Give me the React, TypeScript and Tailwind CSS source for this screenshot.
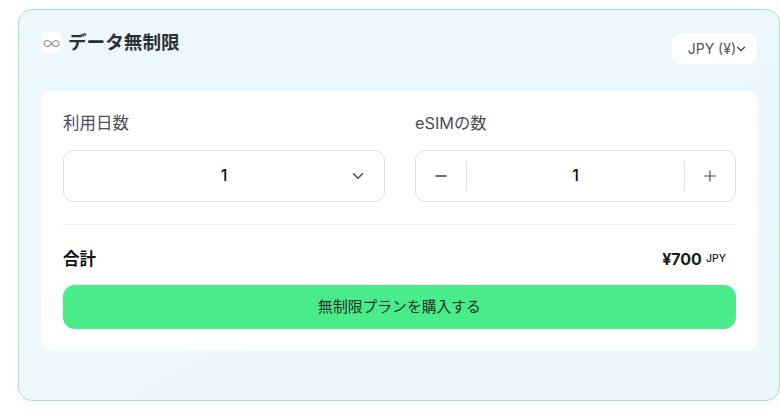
import { ChevronDown, Minus, Plus } from "lucide-react";

export default function App() {
  return (
    <div className="w-[780px] h-[410px] overflow-hidden bg-white pt-[9px] pl-[18px] font-['Inter','Noto_Sans_CJK_JP',sans-serif]">
      <div className="w-[762px] h-[392px] rounded-[14px] border border-[#9fe8bf] bg-gradient-to-br from-[#ecf7fe] via-[#ecf7fe] to-[#ebf6fb] shadow-[0_4px_12px_rgba(0,0,0,0.03)] pt-[20px] pl-[22px] pr-[20px]">
        <div className="flex justify-between items-start h-[61px] w-[717px]">
          <div className="flex items-center gap-[6px] h-[24px]">
            <span className="flex items-center justify-center w-[21px] h-[21px] rounded-[6px] bg-white text-[#777] text-[17px] font-light leading-none font-['Noto_Sans_CJK_JP',sans-serif]">∞</span>
            <span className="text-[18.6px] font-bold leading-[24px] text-[#2b3036]">データ無制限</span>
          </div>
          <div className="flex items-center justify-end w-[87px] h-[33px] mt-[2px] rounded-[10px] border border-[#eef3f6] bg-white pr-[9px] text-[14px] text-[#555]">
            <span>JPY (¥)</span>
            <ChevronDown size={14} strokeWidth={2} className="-ml-[2px] text-[#444]" />
          </div>
        </div>
        <div className="w-[717px] h-[260px] rounded-[10px] bg-white px-[22px] pt-[20px]">
          <div className="grid grid-cols-[322px_321px] gap-x-[30px]">
            <div>
              <div className="h-[24px] text-[16.5px] leading-[24px] text-[#4a4d52]">利用日数</div>
              <div className="relative flex items-center justify-center mt-[15px] h-[52px] rounded-[10px] border border-[#dfe1e3] bg-white text-[16px] font-medium text-[#111]">
                <span className="-mt-[2px]">1</span>
                <ChevronDown size={18} strokeWidth={2} className="absolute right-[17px] text-[#4b4f55]" />
              </div>
            </div>
            <div>
              <div className="h-[24px] text-[16.3px] leading-[24px] text-[#4a4d52]">eSIMの数</div>
              <div className="flex items-center mt-[15px] h-[52px] rounded-[10px] border border-[#dfe1e3] bg-white text-[16px] font-medium text-[#111]">
                <div className="flex items-center justify-center w-[51px] h-[30px] border-r border-[#dfe1e3]">
                  <Minus size={18} strokeWidth={1.7} className="text-[#444]" />
                </div>
                <span className="flex-1 text-center -mt-[2px]">1</span>
                <div className="flex items-center justify-center w-[51px] h-[30px] border-l border-[#dfe1e3]">
                  <Plus size={18} strokeWidth={1.5} className="text-[#444]" />
                </div>
              </div>
            </div>
          </div>
          <div className="mt-[22px] h-px bg-[#eceef0]" />
          <div className="flex justify-between items-center mt-[22px] h-[24px]">
            <span className="text-[16.5px] font-bold text-[#111]">合計</span>
            <div className="flex items-start gap-[4px] pr-[10px]">
              <span className="text-[16px] font-bold leading-[24px] text-[#1a1d20]">¥700</span>
              <span className="mt-[2px] text-[10.5px] font-medium leading-[20px] text-[#222]">JPY</span>
            </div>
          </div>
          <button className="flex items-center justify-center w-full h-[44px] mt-[14px] rounded-[12px] bg-[#48ec88] text-[14.8px] text-[#26332b]">
            無制限プランを購入する
          </button>
        </div>
      </div>
    </div>
  );
}
